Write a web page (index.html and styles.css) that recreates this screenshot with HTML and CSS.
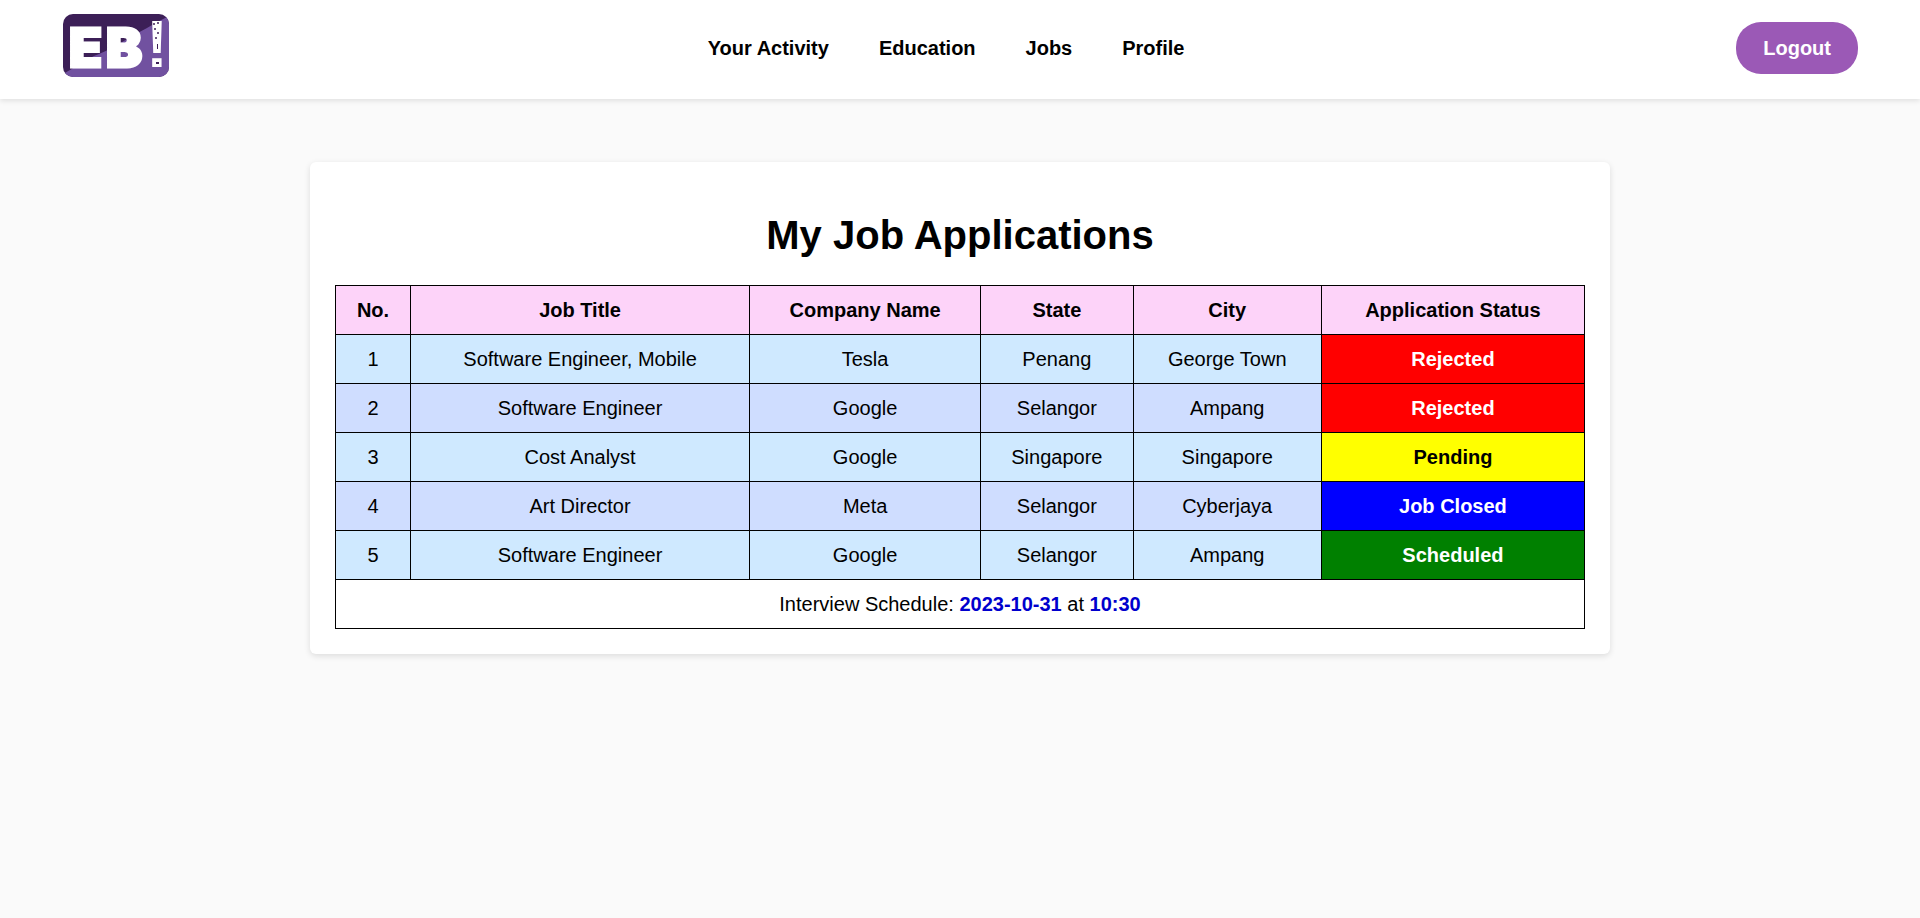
FILE: index.html
```html
<!DOCTYPE html>
<html lang="en">
<head>
<meta charset="utf-8">
<title>My Job Applications</title>
<link rel="stylesheet" href="styles.css">
</head>
<body>
<header class="header">
  <a class="logo" href="#" aria-label="EB home">
    <svg class="logo-image" viewBox="0 0 106 63" width="106" height="63">
      <defs><clipPath id="badge"><rect width="106" height="63" rx="10"/></clipPath></defs>
      <g clip-path="url(#badge)">
        <rect width="106" height="63" fill="#3c1f57"/>
        <path d="M0 60C12 54 22 45 36 40C53 33 66 23 84 14C92 9 100 5 106 2V63H0Z" fill="#7151a0"/>
      </g>
      <text class="logo-letter" x="6" y="53">E</text>
      <text class="logo-letter" x="43" y="53">B</text>
      <text class="logo-mark" x="83" y="53">!</text>
      <g fill="#3c1f57">
        <circle cx="91" cy="10" r="1"/><circle cx="95" cy="9" r="1"/><circle cx="92" cy="15" r="1"/>
        <circle cx="95" cy="19" r="1"/><circle cx="93" cy="24" r="1"/><rect x="94" y="30" width="1" height="5"/>
        <rect x="93" y="48" width="3" height="2"/>
      </g>
    </svg>
  </a>
  <nav class="nav">
    <a class="nav-link" href="#">Your Activity</a>
    <a class="nav-link" href="#">Education</a>
    <a class="nav-link" href="#">Jobs</a>
    <a class="nav-link" href="#">Profile</a>
  </nav>
  <button class="logout" type="button">Logout</button>
</header>
<main class="card">
  <h1 class="title">My Job Applications</h1>
  <table class="jobs">
    <thead>
      <tr><th>No.</th><th>Job Title</th><th>Company Name</th><th>State</th><th>City</th><th>Application Status</th></tr>
    </thead>
    <tbody>
      <tr class="job"><td>1</td><td>Software Engineer, Mobile</td><td>Tesla</td><td>Penang</td><td>George Town</td><td class="status rejected">Rejected</td></tr>
      <tr class="job"><td>2</td><td>Software Engineer</td><td>Google</td><td>Selangor</td><td>Ampang</td><td class="status rejected">Rejected</td></tr>
      <tr class="job"><td>3</td><td>Cost Analyst</td><td>Google</td><td>Singapore</td><td>Singapore</td><td class="status pending">Pending</td></tr>
      <tr class="job"><td>4</td><td>Art Director</td><td>Meta</td><td>Selangor</td><td>Cyberjaya</td><td class="status closed">Job Closed</td></tr>
      <tr class="job"><td>5</td><td>Software Engineer</td><td>Google</td><td>Selangor</td><td>Ampang</td><td class="status scheduled">Scheduled</td></tr>
      <tr><td colspan="6">Interview Schedule: <b class="when">2023-10-31</b> at <b class="when">10:30</b></td></tr>
    </tbody>
  </table>
</main>
</body>
</html>
```
FILE: styles.css
```css
* {
  box-sizing: border-box;
}

body {
  margin: 0;
  background: #fafafa;
  color: #000;
  font-family: "Liberation Sans", Arial, sans-serif;
  font-size: 20px;
  line-height: 24px;
}

.header {
  display: flex;
  align-items: center;
  justify-content: space-between;
  padding: 14px 62px 17px 63px;
  background: #fff;
  box-shadow: 0 2px 5px rgba(0, 0, 0, 0.1);
}

.logo {
  padding-bottom: 5px;
}

.logo-image {
  display: block;
  overflow: visible;
}

.logo-letter {
  fill: #fff;
  stroke: #fff;
  stroke-width: 3px;
  font-family: Inter, sans-serif;
  font-size: 54px;
  font-weight: 900;
}

.logo-mark {
  fill: #fff;
  font-family: "Liberation Sans", sans-serif;
  font-size: 66px;
  font-weight: bold;
}

.nav {
  display: flex;
  gap: 50px;
  margin-right: 13px;
}

.nav-link {
  color: #000;
  font-weight: bold;
  text-decoration: none;
}

.logout {
  padding: 14px 27px;
  border: 0;
  border-radius: 25px;
  background: #9b59b6;
  color: #fff;
  font: inherit;
  font-weight: bold;
  cursor: pointer;
}

.card {
  width: calc(100% - 50px);
  max-width: 1300px;
  margin: 63px auto;
  padding: 25px;
  border-radius: 6px;
  background: #fff;
  box-shadow: 0 2px 6px rgba(0, 0, 0, 0.12);
}

.title {
  margin: 25px 0 27px;
  font-size: 40px;
  line-height: 46px;
  text-align: center;
}

.jobs {
  width: 100%;
  border-collapse: collapse;
  text-align: center;
}

.jobs th,
.jobs td {
  padding: 12px;
  border: 1px solid #000;
}

.jobs th {
  background: #fdd3f9;
}

.job {
  background: #cfe9ff;
}

.job:nth-child(even) {
  background: #cfddff;
}

.status {
  color: #fff;
  font-weight: bold;
}

.rejected {
  background: #f00;
}

.pending {
  background: #ff0;
  color: #000;
}

.closed {
  background: #00f;
}

.scheduled {
  background: #008000;
}

.when {
  color: #0000cd;
}
```
